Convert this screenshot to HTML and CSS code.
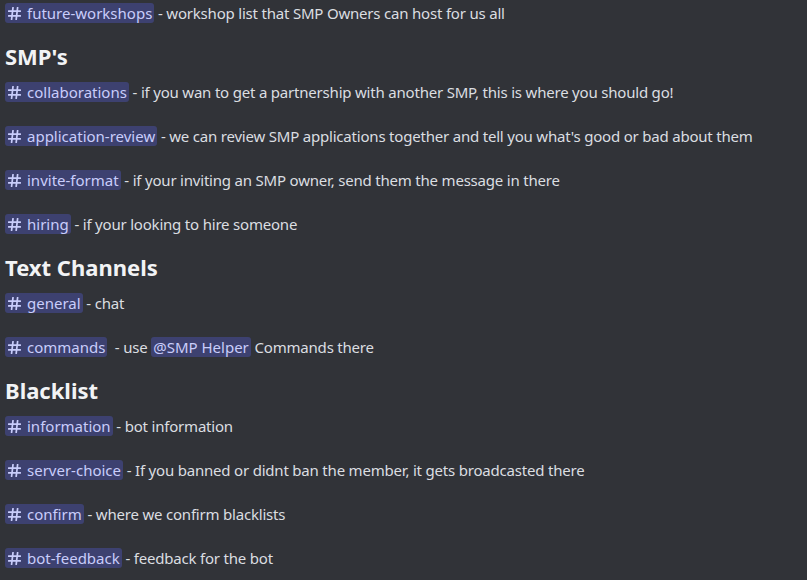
FILE: index.html
```html
<!DOCTYPE html>
<html>
<head>
<meta charset="utf-8">
<link rel="stylesheet" href="styles.css">
</head>
<body>
<svg width="0" height="0" class="defs" aria-hidden="true">
  <symbol id="hash" viewBox="0 0 13 13">
    <path d="M5 0.6 L3.6 12.4 M9.6 0.6 L8.2 12.4 M0.6 4.1 H12.4 M0.6 8.9 H12.4" fill="none" stroke="currentColor" stroke-width="1.7" stroke-linecap="round"/>
  </symbol>
</svg>
<div class="message">
  <div class="line"><span class="mention"><svg class="hash"><use href="#hash"/></svg>future-workshops</span> - workshop list that SMP Owners can host for us all</div>
  <h1 class="heading">SMP's</h1>
  <div class="line"><span class="mention"><svg class="hash"><use href="#hash"/></svg>collaborations</span> - if you wan to get a partnership with another SMP, this is where you should go!</div>
  <div class="line"><span class="mention"><svg class="hash"><use href="#hash"/></svg>application-review</span> - we can review SMP applications together and tell you what's good or bad about them</div>
  <div class="line"><span class="mention"><svg class="hash"><use href="#hash"/></svg>invite-format</span> - if your inviting an SMP owner, send them the message in there</div>
  <div class="line"><span class="mention"><svg class="hash"><use href="#hash"/></svg>hiring</span> - if your looking to hire someone</div>
  <h1 class="heading">Text Channels</h1>
  <div class="line"><span class="mention"><svg class="hash"><use href="#hash"/></svg>general</span> - chat</div>
  <div class="line"><span class="mention"><svg class="hash"><use href="#hash"/></svg>commands</span>&nbsp; - use <span class="mention">@SMP Helper</span> Commands there</div>
  <h1 class="heading">Blacklist</h1>
  <div class="line"><span class="mention"><svg class="hash"><use href="#hash"/></svg>information</span> - bot information</div>
  <div class="line"><span class="mention"><svg class="hash"><use href="#hash"/></svg>server-choice</span> - If you banned or didnt ban the member, it gets broadcasted there</div>
  <div class="line"><span class="mention"><svg class="hash"><use href="#hash"/></svg>confirm</span> - where we confirm blacklists</div>
  <div class="line"><span class="mention"><svg class="hash"><use href="#hash"/></svg>bot-feedback</span> - feedback for the bot</div>
</div>
</body>
</html>
```

FILE: styles.css
```css
html, body {
  margin: 0;
  padding: 0;
  background: #313338;
  height: 100%;
  overflow: hidden;
}

.defs {
  position: absolute;
}

.message {
  padding: 2px 0 0 5px;
  font-family: "Noto Sans", sans-serif;
  font-size: 15px;
  letter-spacing: -0.2px;
  line-height: 22px;
  color: #dbdee1;
}

.line {
  height: 22px;
  margin-bottom: 22px;
  white-space: nowrap;
}

.line:has(+ .heading),
.line:last-child {
  margin-bottom: 0;
}

.heading {
  margin: 16px 0 8px;
  font-size: 22px;
  line-height: 33px;
  font-weight: 700;
  letter-spacing: 0;
  color: #f2f3f5;
}

.mention {
  background: rgba(88, 101, 242, 0.3);
  color: #c9cdfb;
  border-radius: 3px;
  padding: 0 2px;
  letter-spacing: 0;
}

.hash {
  width: 13px;
  height: 13px;
  margin: 0 6px 0 1px;
  vertical-align: -1px;
}
```
